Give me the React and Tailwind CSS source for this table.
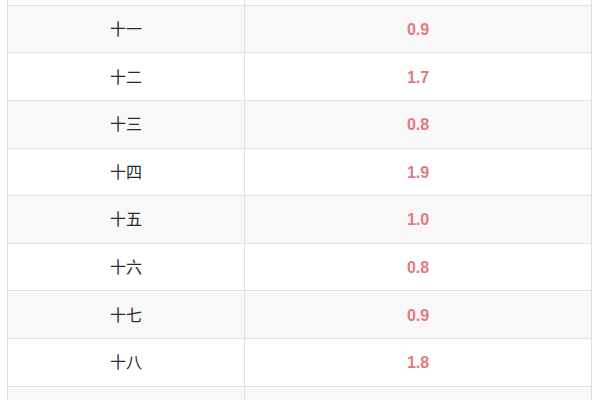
export default function App() {
  const rows = [
    ["", ""],
    ["十一", "0.9"],
    ["十二", "1.7"],
    ["十三", "0.8"],
    ["十四", "1.9"],
    ["十五", "1.0"],
    ["十六", "0.8"],
    ["十七", "0.9"],
    ["十八", "1.8"],
    ["", ""],
  ];
  return (
    <div className="w-[600px] h-[400px] overflow-hidden bg-white relative">
      <div className="absolute left-[7px] top-[-41.8px] w-[585px] border-l border-r border-[#dedede]">
        {rows.map(([a, b], i) => (
          <div
            key={i}
            className={`flex h-[47.6px] border-b border-[#e2e2e2] ${i % 2 === 1 ? "bg-[#f8f8f8]" : "bg-white"}`}
          >
            <div className="w-[237px] flex items-center justify-center pt-[2px] border-r border-[#e2e2e2] text-[16px] text-[#2a2a2a] font-['Liberation_Sans','Noto_Sans_CJK_SC',sans-serif]">
              {a}
            </div>
            <div className="flex-1 flex items-center justify-center pt-[2px] text-[16px] font-bold text-[#e27a80] font-['Liberation_Sans',sans-serif]">
              {b}
            </div>
          </div>
        ))}
      </div>
    </div>
  );
}
